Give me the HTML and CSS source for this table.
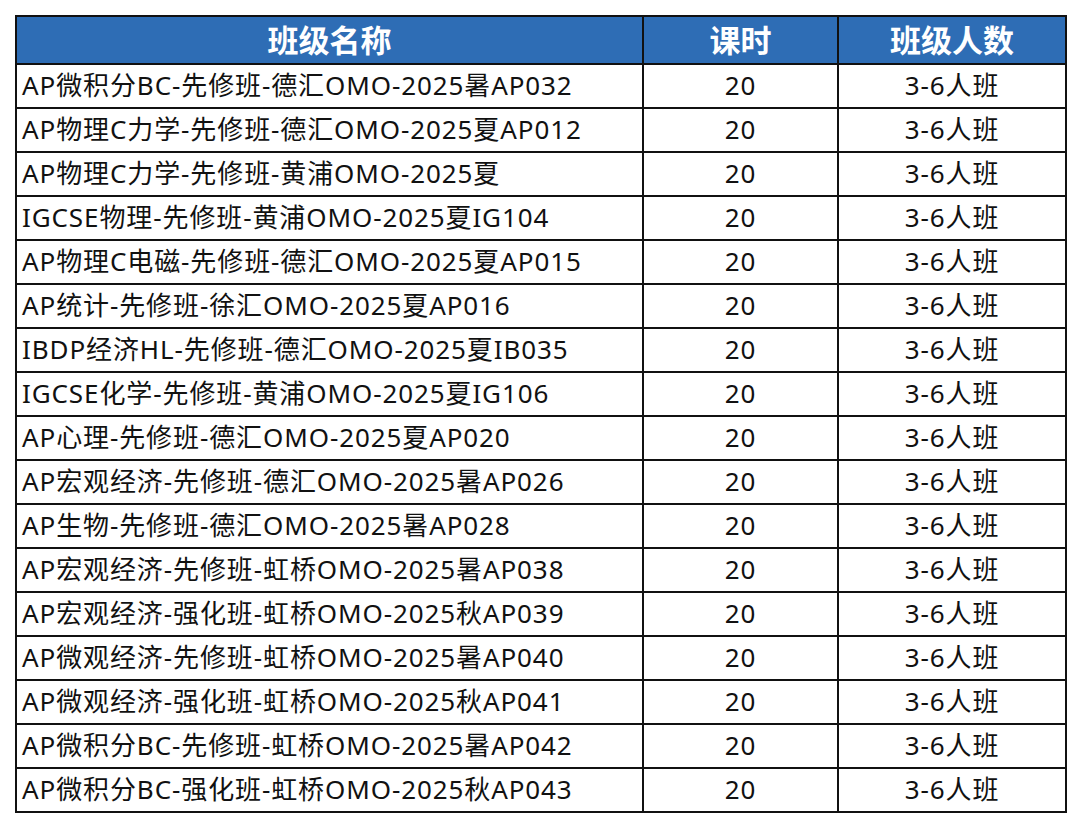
FILE: index.html
```html
<!DOCTYPE html>
<html lang="zh-CN">
<head>
<meta charset="utf-8">
<link rel="stylesheet" href="styles.css">
</head>
<body>
<table class="tbl">
  <colgroup><col class="c1"><col class="c2"><col class="c3"></colgroup>
  <thead>
    <tr><th>班级名称</th><th>课时</th><th>班级人数</th></tr>
  </thead>
  <tbody>
    <tr><td class="name">AP微积分BC-先修班-德汇OMO-2025暑AP032</td><td>20</td><td>3-6人班</td></tr>
    <tr><td class="name">AP物理C力学-先修班-德汇OMO-2025夏AP012</td><td>20</td><td>3-6人班</td></tr>
    <tr><td class="name">AP物理C力学-先修班-黄浦OMO-2025夏</td><td>20</td><td>3-6人班</td></tr>
    <tr><td class="name">IGCSE物理-先修班-黄浦OMO-2025夏IG104</td><td>20</td><td>3-6人班</td></tr>
    <tr><td class="name">AP物理C电磁-先修班-德汇OMO-2025夏AP015</td><td>20</td><td>3-6人班</td></tr>
    <tr><td class="name">AP统计-先修班-徐汇OMO-2025夏AP016</td><td>20</td><td>3-6人班</td></tr>
    <tr><td class="name">IBDP经济HL-先修班-德汇OMO-2025夏IB035</td><td>20</td><td>3-6人班</td></tr>
    <tr><td class="name">IGCSE化学-先修班-黄浦OMO-2025夏IG106</td><td>20</td><td>3-6人班</td></tr>
    <tr><td class="name">AP心理-先修班-德汇OMO-2025夏AP020</td><td>20</td><td>3-6人班</td></tr>
    <tr><td class="name">AP宏观经济-先修班-德汇OMO-2025暑AP026</td><td>20</td><td>3-6人班</td></tr>
    <tr><td class="name">AP生物-先修班-德汇OMO-2025暑AP028</td><td>20</td><td>3-6人班</td></tr>
    <tr><td class="name">AP宏观经济-先修班-虹桥OMO-2025暑AP038</td><td>20</td><td>3-6人班</td></tr>
    <tr><td class="name">AP宏观经济-强化班-虹桥OMO-2025秋AP039</td><td>20</td><td>3-6人班</td></tr>
    <tr><td class="name">AP微观经济-先修班-虹桥OMO-2025暑AP040</td><td>20</td><td>3-6人班</td></tr>
    <tr><td class="name">AP微观经济-强化班-虹桥OMO-2025秋AP041</td><td>20</td><td>3-6人班</td></tr>
    <tr><td class="name">AP微积分BC-先修班-虹桥OMO-2025暑AP042</td><td>20</td><td>3-6人班</td></tr>
    <tr><td class="name">AP微积分BC-强化班-虹桥OMO-2025秋AP043</td><td>20</td><td>3-6人班</td></tr>
  </tbody>
</table>
</body>
</html>
```
FILE: styles.css
```css
html, body {
  margin: 0;
  padding: 0;
  background: #ffffff;
}
body {
  padding: 15px 0 0 15px;
  font-family: "Noto Sans", "Noto Sans CJK SC", sans-serif;
  color: #111;
}
.tbl {
  border-collapse: collapse;
  table-layout: fixed;
  width: 1050px;
  border: 2px solid #111;
}
.c1 { width: 627px; }
.c2 { width: 195px; }
.c3 { width: 228px; }
.tbl th {
  background: #2e6db5;
  color: #fff;
  font-family: "Noto Sans CJK SC", sans-serif;
  font-weight: 700;
  font-size: 31px;
  height: 43px;
  padding: 0 0 3px 0;
  border: 2px solid #111;
  line-height: 1;
  text-align: center;
}
.tbl td {
  height: 39px;
  padding: 0 0 3px 0;
  border: 2px solid #111;
  font-size: 26px;
  letter-spacing: 0.9px;
  line-height: 1;
  text-align: center;
  white-space: nowrap;
}
.tbl td.name {
  text-align: left;
  padding-left: 5px;
}
```
